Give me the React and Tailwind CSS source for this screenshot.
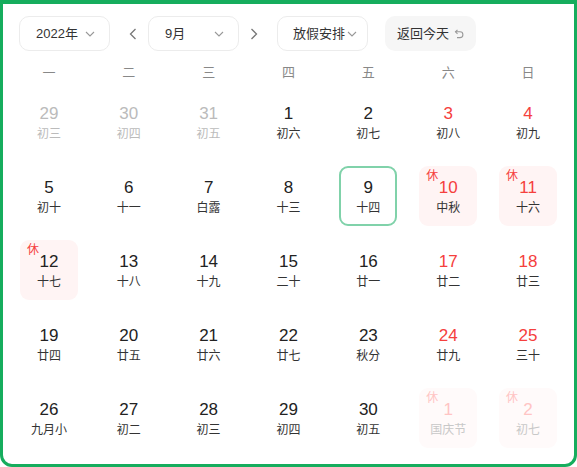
import React from 'react';

const font = { fontFamily: '"Liberation Sans", "Noto Sans CJK SC", sans-serif' };

const Chevron = () => (
  <svg width="10" height="6" viewBox="0 0 10 6" fill="none" stroke="#999" strokeWidth="1.1">
    <polyline points="1,1 5,5 9,1" />
  </svg>
);

const Select = ({ label, w = 'w-[91px]', px = 'pl-4 pr-[14px]' }) => (
  <div className={`flex items-center justify-between h-[35px] ${w} ${px} border border-[#ececec] rounded-[10px] text-[13px] text-[#333]`}>
    <span>{label}</span>
    <Chevron />
  </div>
);

const Arrow = ({ dir }) => (
  <svg width="8" height="12" viewBox="0 0 8 12" fill="none" stroke="#777" strokeWidth="1.3">
    {dir === 'left' ? <polyline points="6.5,1 1.5,6 6.5,11" /> : <polyline points="1.5,1 6.5,6 1.5,11" />}
  </svg>
);

const weeks = ['一', '二', '三', '四', '五', '六', '日'];

// t: 'prev' | 'today' | 'rest' | 'nextrest'
const days = [
  ['29', '初三', 'prev'], ['30', '初四', 'prev'], ['31', '初五', 'prev'], ['1', '初六'], ['2', '初七'], ['3', '初八'], ['4', '初九'],
  ['5', '初十'], ['6', '十一'], ['7', '白露'], ['8', '十三'], ['9', '十四', 'today'], ['10', '中秋', 'rest'], ['11', '十六', 'rest'],
  ['12', '十七', 'rest'], ['13', '十八'], ['14', '十九'], ['15', '二十'], ['16', '廿一'], ['17', '廿二'], ['18', '廿三'],
  ['19', '廿四'], ['20', '廿五'], ['21', '廿六'], ['22', '廿七'], ['23', '秋分'], ['24', '廿九'], ['25', '三十'],
  ['26', '九月小'], ['27', '初二'], ['28', '初三'], ['29', '初四'], ['30', '初五'], ['1', '国庆节', 'nextrest'], ['2', '初七', 'nextrest'],
];

const Cell = ({ d, idx }) => {
  const [num, lunar, t] = d;
  const weekend = idx % 7 >= 5;
  let box = 'border-2 border-transparent';
  let numCls = weekend ? 'text-[#f5403d]' : 'text-[#222]';
  let lunarCls = 'text-[#333]';
  let rest = null;
  if (t === 'prev') {
    numCls = 'text-[#bbb]';
    lunarCls = 'text-[#bbb]';
  }
  if (t === 'today') box = 'border-2 border-[#80d2aa]';
  if (t === 'rest') {
    box = 'border-2 border-transparent bg-[#fff4f4]';
    rest = 'text-[#f5403d]';
  }
  if (t === 'nextrest') {
    box = 'border-2 border-transparent bg-[#fffafa]';
    numCls = 'text-[#ffc4c4]';
    lunarCls = 'text-[#c8c8c8]';
    rest = 'text-[#ffc4c4]';
  }
  return (
    <div className="flex justify-center">
      <div className={`relative w-[58px] h-[60px] rounded-[9px] flex flex-col items-center pt-[10px] ${box}`}>
        {rest && <span className={`absolute left-[5px] top-[2px] text-[12px] leading-none ${rest}`}>休</span>}
        <span className={`text-[17px] leading-[20px] ${numCls}`}>{num}</span>
        <span className={`text-[12px] leading-[20px] ${lunarCls}`}>{lunar}</span>
      </div>
    </div>
  );
};

export default function App() {
  return (
    <div style={font} className="w-[577px] h-[467px] bg-white border-[#16ad5d] border-t-4 border-x-[3px] border-b-[3px] rounded-b-[12px] overflow-hidden">
      <div className="flex items-center pl-4 pt-3">
        <Select label="2022年" />
        <div className="w-[38px] flex justify-end pr-[11px]"><Arrow dir="left" /></div>
        <Select label="9月" />
        <div className="w-[38px] flex justify-start pl-[11px]"><Arrow dir="right" /></div>
        <Select label="放假安排" px="pl-[15px] pr-[10px]" />
        <div className="ml-[17px] flex items-center gap-[5px] h-[35px] w-[91px] pl-3 rounded-[10px] bg-[#f6f6f6] text-[13px] text-[#333]">
          <span>返回今天</span>
          <svg width="10" height="10" viewBox="0 0 10 10" fill="none" stroke="#999" strokeWidth="1.1">
            <polyline points="3.5,0.8 1.5,2.8 3.5,4.8" />
            <path d="M1.5 2.8 H6 a2.9 2.9 0 0 1 0 5.8 H3" />
          </svg>
        </div>
      </div>
      <div className="px-[6px]">
        <div className="grid grid-cols-7 mt-3 h-[20px] items-center">
          {weeks.map((w) => (
            <div key={w} className="text-center text-[13px] text-[#888]">{w}</div>
          ))}
        </div>
        <div className="grid grid-cols-7 gap-y-[14px] mt-[9px]">
          {days.map((d, i) => (
            <Cell key={i} d={d} idx={i} />
          ))}
        </div>
      </div>
    </div>
  );
}
